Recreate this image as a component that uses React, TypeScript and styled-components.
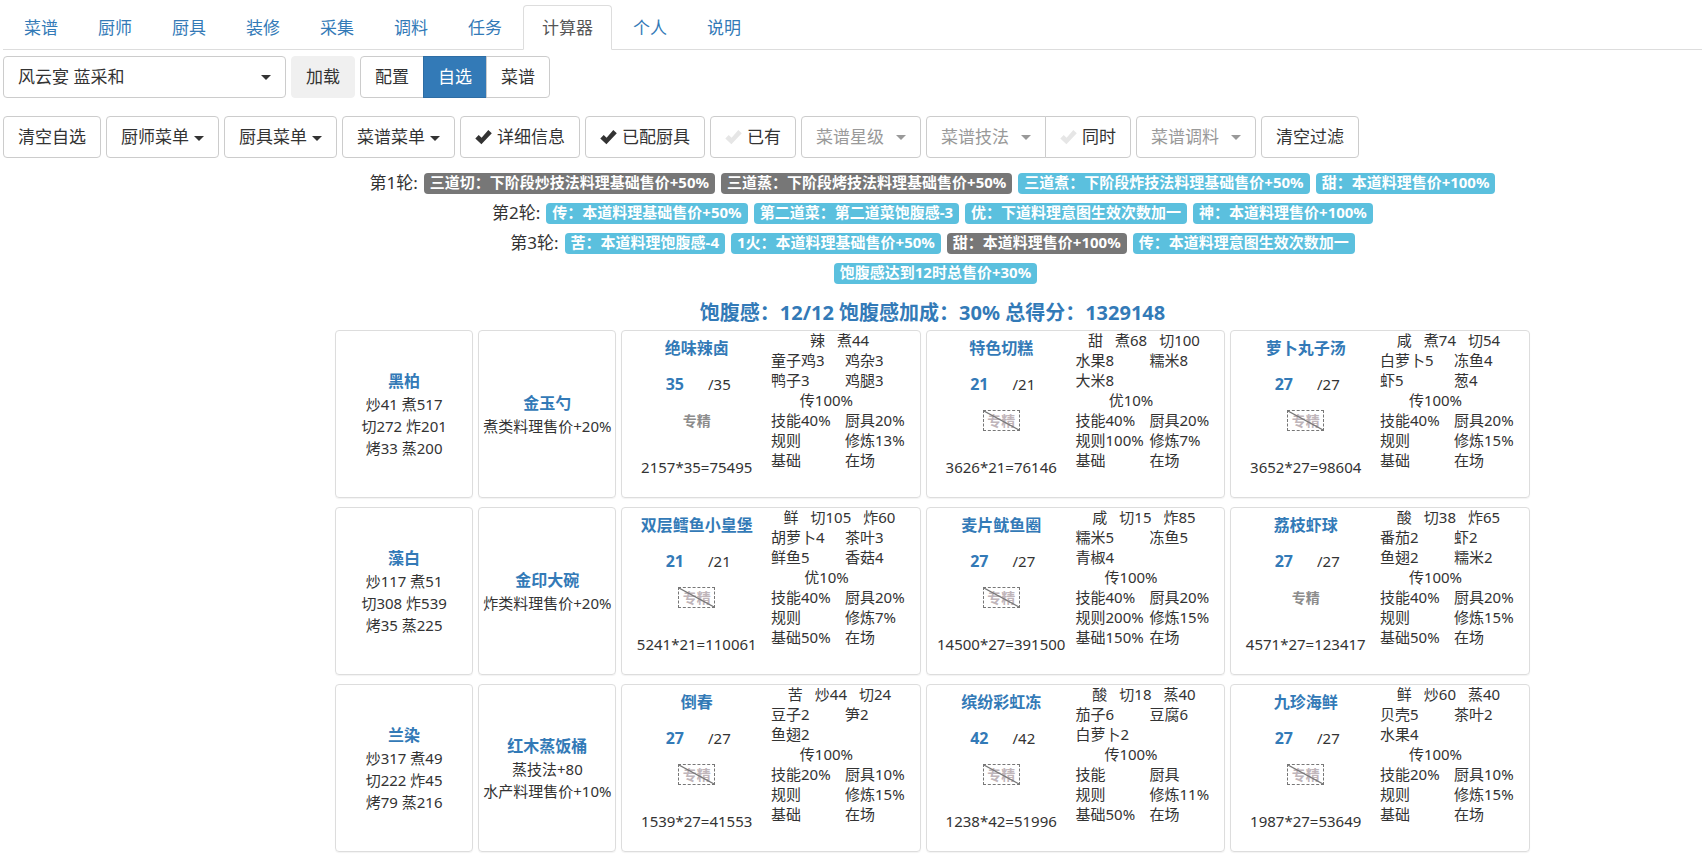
import React from 'react';
import styled, { createGlobalStyle, css } from 'styled-components';

const GlobalStyle = createGlobalStyle`
  * { box-sizing: border-box; }
  body {
    margin: 0;
    background: #fff;
    color: #333;
    font: 15px/22px "Noto Sans", "Noto Sans CJK SC", sans-serif;
  }
  button, select { font: inherit; color: inherit; }
  a { color: #337ab7; text-decoration: none; }
`;

const Page = styled.div`
  padding: 5px 0 0 3px;
`;

const Tabs = styled.nav`
  display: flex;
  gap: 2px;
  padding-left: 2px;
  border-bottom: 1px solid #ddd;
`;

const Tab = styled.a<{ $active?: boolean }>`
  height: 45px;
  margin-bottom: -1px;
  padding: 0 18px;
  border: 1px solid transparent;
  border-radius: 4px 4px 0 0;
  font-size: 17px;
  line-height: 44px;
  white-space: nowrap;
  ${(p) => p.$active && css`
    color: #555;
    background: #fff;
    border-color: #ddd #ddd #fff;
  `}
`;

const Toolbar = styled.div`
  display: flex;
  flex-wrap: wrap;
  gap: 5px;
  padding-top: 6px;
  & + & { padding-top: 18px; }
`;

const control = css`
  height: 42px;
  padding: 0 14px;
  border: 1px solid #ccc;
  border-radius: 4px;
  background: #fff;
  font-size: 17px;
  line-height: 40px;
  white-space: nowrap;
`;

const Button = styled.button<{ $tone?: 'muted' | 'primary' }>`
  ${control}
  display: inline-flex;
  align-items: center;
  cursor: pointer;
  ${(p) => p.$tone === 'muted' && css`background: #f0f0f0; border-color: #f0f0f0;`}
  ${(p) => p.$tone === 'primary' && css`color: #fff; background: #337ab7; border-color: #2e6da4;`}
`;

const Group = styled.div`
  display: flex;
  & > * { position: relative; }
  & > * + * { margin-left: -1px; }
  & > :not(:last-child), & > :not(:last-child) select { border-top-right-radius: 0; border-bottom-right-radius: 0; }
  & > :not(:first-child) { border-top-left-radius: 0; border-bottom-left-radius: 0; }
`;

const SelectBox = styled.label`
  display: grid;
  align-items: center;
`;

const Select = styled.select<{ $large?: boolean }>`
  ${control}
  grid-area: 1 / 1;
  width: ${(p) => (p.$large ? 283 : 120)}px;
  color: ${(p) => (p.$large ? '#333' : '#999')};
  appearance: none;
`;

const Caret = styled.span`
  margin: 2px 0 0 5px;
  border: solid transparent;
  border-width: 5px 5px 0;
  border-top-color: currentColor;
`;

const SelectCaret = styled(Caret)<{ $large?: boolean }>`
  grid-area: 1 / 1;
  justify-self: end;
  margin: 0 15px 0 0;
  color: ${(p) => (p.$large ? '#333' : '#999')};
  pointer-events: none;
`;

const CheckMark = styled.svg<{ $off?: boolean }>`
  width: 17px;
  height: 17px;
  margin-right: 5px;
  fill: ${(p) => (p.$off ? '#e6e6e6' : '#333')};
`;

const Results = styled.main`
  padding: 10px 3px 4px 163px;
`;

const Rule = styled.div<{ $indent?: boolean }>`
  display: flex;
  flex-wrap: wrap;
  justify-content: center;
  align-items: center;
  gap: 6px;
  min-height: 30px;
  padding-left: ${(p) => (p.$indent ? 6 : 0)}px;
  font-size: 17px;
`;

const Badge = styled.span<{ $used?: boolean }>`
  padding: 0 6px 2px;
  border-radius: 4px;
  background: ${(p) => (p.$used ? '#777' : '#5bc0de')};
  color: #fff;
  font-size: 15px;
  font-weight: 700;
  line-height: 19px;
`;

const Summary = styled.h1`
  margin: 11px 0 3px;
  color: #337ab7;
  font-size: 20px;
  line-height: 28px;
  text-align: center;
`;

const Board = styled.div`
  display: grid;
  grid-template-columns: 6fr 6fr 13fr 13fr 13fr;
  gap: 9px 5px;
  max-width: 1195px;
  margin: 0 auto;
`;

const Card = styled.section`
  min-height: 168px;
  border: 1px solid #ddd;
  border-radius: 4px;
  box-shadow: 0 1px 1px rgba(0, 0, 0, 0.05);
`;

const InfoCard = styled(Card)`
  display: flex;
  flex-direction: column;
  align-items: center;
  justify-content: center;
  white-space: nowrap;
`;

const Name = styled.a`
  font-size: 16px;
  font-weight: 700;
  line-height: 24px;
`;

const DishCard = styled(Card)`
  display: flex;
`;

const Dish = styled.div`
  display: flex;
  flex: 1;
  flex-direction: column;
  align-items: center;
  padding-top: 5px;
  white-space: nowrap;
`;

const Count = styled.div`
  display: flex;
  gap: 24px;
  margin: 12px 0 14px;
  padding-left: 3px;
  line-height: 24px;
`;

const Mastery = styled.button<{ $off: boolean }>`
  display: grid;
  place-items: center;
  width: 37px;
  height: 21px;
  margin-bottom: 26px;
  padding: 0;
  border: 1px ${(p) => (p.$off ? 'dashed #777' : 'solid transparent')};
  background: none;
  color: ${(p) => (p.$off ? '#bfb5ba' : '#8c8c8c')};
  font-size: 14px;
  font-weight: 700;
  line-height: 19px;
  & > * { grid-area: 1 / 1; }
`;

const Formula = styled.div`
  line-height: 20px;
`;

const Details = styled.div`
  display: grid;
  grid-template-columns: 74px 63px;
  grid-auto-rows: 20px;
  margin-right: 12px;
  line-height: 18px;
  white-space: nowrap;
`;

const Skills = styled.div`
  display: flex;
  grid-column: 1 / -1;
  justify-content: center;
  gap: 12px;
`;

const Effect = styled.div`
  grid-column: 1 / -1;
  padding-right: 26px;
  text-align: center;
`;

const Check = ({ off }: { off?: boolean }) => (
  <CheckMark $off={off} viewBox="0 0 17 17" aria-hidden="true">
    <path d="M13.3 1 16.8 4.2 6.4 15.2 0.3 9.6 3.7 6.1 6.6 8.7Z" />
  </CheckMark>
);

const Slash = () => (
  <svg width="35" height="19" viewBox="0 0 35 19" aria-hidden="true">
    <path d="M0 0 35 19" stroke="#777" strokeWidth="1.2" />
  </svg>
);

const Picker = ({ label, large }: { label: string; large?: boolean }) => (
  <SelectBox>
    <Select $large={large} aria-label={label} defaultValue={label}>
      <option>{label}</option>
    </Select>
    <SelectCaret $large={large} />
  </SelectBox>
);

const tabs = ['菜谱', '厨师', '厨具', '装修', '采集', '调料', '任务', '计算器', '个人', '说明'];

const rules: { label?: string; items: [string, boolean?][] }[] = [
  {
    label: '第1轮:',
    items: [
      ['三道切：下阶段炒技法料理基础售价+50%', true],
      ['三道蒸：下阶段烤技法料理基础售价+50%', true],
      ['三道煮：下阶段炸技法料理基础售价+50%'],
      ['甜：本道料理售价+100%'],
    ],
  },
  {
    label: '第2轮:',
    items: [
      ['传：本道料理基础售价+50%'],
      ['第二道菜：第二道菜饱腹感-3'],
      ['优：下道料理意图生效次数加一'],
      ['神：本道料理售价+100%'],
    ],
  },
  {
    label: '第3轮:',
    items: [
      ['苦：本道料理饱腹感-4'],
      ['1火：本道料理基础售价+50%'],
      ['甜：本道料理售价+100%', true],
      ['传：本道料理意图生效次数加一'],
    ],
  },
  { items: [['饱腹感达到12时总售价+30%']] },
];

interface DishData {
  name: string;
  count: number;
  mastered?: boolean;
  formula: string;
  skills: string[];
  materials: string[];
  effect: string;
  bonus: string[];
}

interface Round {
  chef: [string, string[]];
  tool: [string, string[]];
  dishes: DishData[];
}

const rounds: Round[] = [
  {
    chef: ['黑柏', ['炒41 煮517', '切272 炸201', '烤33 蒸200']],
    tool: ['金玉勺', ['煮类料理售价+20%']],
    dishes: [
      { name: '绝味辣卤', count: 35, mastered: true, formula: '2157*35=75495', skills: ['辣', '煮44'], materials: ['童子鸡3', '鸡杂3', '鸭子3', '鸡腿3'], effect: '传100%', bonus: ['技能40%', '厨具20%', '规则', '修炼13%', '基础', '在场'] },
      { name: '特色切糕', count: 21, formula: '3626*21=76146', skills: ['甜', '煮68', '切100'], materials: ['水果8', '糯米8', '大米8', ''], effect: '优10%', bonus: ['技能40%', '厨具20%', '规则100%', '修炼7%', '基础', '在场'] },
      { name: '萝卜丸子汤', count: 27, formula: '3652*27=98604', skills: ['咸', '煮74', '切54'], materials: ['白萝卜5', '冻鱼4', '虾5', '葱4'], effect: '传100%', bonus: ['技能40%', '厨具20%', '规则', '修炼15%', '基础', '在场'] },
    ],
  },
  {
    chef: ['藻白', ['炒117 煮51', '切308 炸539', '烤35 蒸225']],
    tool: ['金印大碗', ['炸类料理售价+20%']],
    dishes: [
      { name: '双层鳕鱼小皇堡', count: 21, formula: '5241*21=110061', skills: ['鲜', '切105', '炸60'], materials: ['胡萝卜4', '茶叶3', '鲜鱼5', '香菇4'], effect: '优10%', bonus: ['技能40%', '厨具20%', '规则', '修炼7%', '基础50%', '在场'] },
      { name: '麦片鱿鱼圈', count: 27, formula: '14500*27=391500', skills: ['咸', '切15', '炸85'], materials: ['糯米5', '冻鱼5', '青椒4', ''], effect: '传100%', bonus: ['技能40%', '厨具20%', '规则200%', '修炼15%', '基础150%', '在场'] },
      { name: '荔枝虾球', count: 27, mastered: true, formula: '4571*27=123417', skills: ['酸', '切38', '炸65'], materials: ['番茄2', '虾2', '鱼翅2', '糯米2'], effect: '传100%', bonus: ['技能40%', '厨具20%', '规则', '修炼15%', '基础50%', '在场'] },
    ],
  },
  {
    chef: ['兰染', ['炒317 煮49', '切222 炸45', '烤79 蒸216']],
    tool: ['红木蒸饭桶', ['蒸技法+80', '水产料理售价+10%']],
    dishes: [
      { name: '倒春', count: 27, formula: '1539*27=41553', skills: ['苦', '炒44', '切24'], materials: ['豆子2', '笋2', '鱼翅2', ''], effect: '传100%', bonus: ['技能20%', '厨具10%', '规则', '修炼15%', '基础', '在场'] },
      { name: '缤纷彩虹冻', count: 42, formula: '1238*42=51996', skills: ['酸', '切18', '蒸40'], materials: ['茄子6', '豆腐6', '白萝卜2', ''], effect: '传100%', bonus: ['技能', '厨具', '规则', '修炼11%', '基础50%', '在场'] },
      { name: '九珍海鲜', count: 27, formula: '1987*27=53649', skills: ['鲜', '炒60', '蒸40'], materials: ['贝壳5', '茶叶2', '水果4', ''], effect: '传100%', bonus: ['技能20%', '厨具10%', '规则', '修炼15%', '基础', '在场'] },
    ],
  },
];

const Info = ({ data: [name, lines] }: { data: [string, string[]] }) => (
  <InfoCard>
    <Name href="#">{name}</Name>
    {lines.map((line) => <div key={line}>{line}</div>)}
  </InfoCard>
);

const DishView = ({ dish }: { dish: DishData }) => (
  <DishCard>
    <Dish>
      <Name href="#">{dish.name}</Name>
      <Count>
        <Name href="#">{dish.count}</Name>
        <span>/{dish.count}</span>
      </Count>
      <Mastery type="button" $off={!dish.mastered} aria-pressed={!!dish.mastered}>
        <span>专精</span>
        {!dish.mastered && <Slash />}
      </Mastery>
      <Formula>{dish.formula}</Formula>
    </Dish>
    <Details>
      <Skills>{dish.skills.map((s) => <span key={s}>{s}</span>)}</Skills>
      {dish.materials.map((m, i) => <span key={i}>{m}</span>)}
      <Effect>{dish.effect}</Effect>
      {dish.bonus.map((b) => <span key={b}>{b}</span>)}
    </Details>
  </DishCard>
);

export default function App() {
  return (
    <>
      <GlobalStyle />
      <Page>
        <Tabs>
          {tabs.map((t) => <Tab key={t} href="#" $active={t === '计算器'}>{t}</Tab>)}
        </Tabs>
        <Toolbar>
          <Picker label="风云宴 蓝采和" large />
          <Button $tone="muted">加载</Button>
          <Group>
            <Button>配置</Button>
            <Button $tone="primary">自选</Button>
            <Button>菜谱</Button>
          </Group>
        </Toolbar>
        <Toolbar>
          <Button>清空自选</Button>
          <Button>厨师菜单<Caret /></Button>
          <Button>厨具菜单<Caret /></Button>
          <Button>菜谱菜单<Caret /></Button>
          <Button aria-pressed="true"><Check />详细信息</Button>
          <Button aria-pressed="true"><Check />已配厨具</Button>
          <Button aria-pressed="false"><Check off />已有</Button>
          <Picker label="菜谱星级" />
          <Group>
            <Picker label="菜谱技法" />
            <Button aria-pressed="false"><Check off />同时</Button>
          </Group>
          <Picker label="菜谱调料" />
          <Button>清空过滤</Button>
        </Toolbar>
        <Results>
          {rules.map((rule, i) => (
            <Rule key={i} $indent={!rule.label}>
              {rule.label && <span>{rule.label}</span>}
              {rule.items.map(([text, used]) => <Badge key={text} $used={used}>{text}</Badge>)}
            </Rule>
          ))}
          <Summary>饱腹感：12/12 饱腹感加成：30% 总得分：1329148</Summary>
          <Board>
            {rounds.map((round) => (
              <React.Fragment key={round.chef[0]}>
                <Info data={round.chef} />
                <Info data={round.tool} />
                {round.dishes.map((d) => <DishView key={d.name} dish={d} />)}
              </React.Fragment>
            ))}
          </Board>
        </Results>
      </Page>
    </>
  );
}
